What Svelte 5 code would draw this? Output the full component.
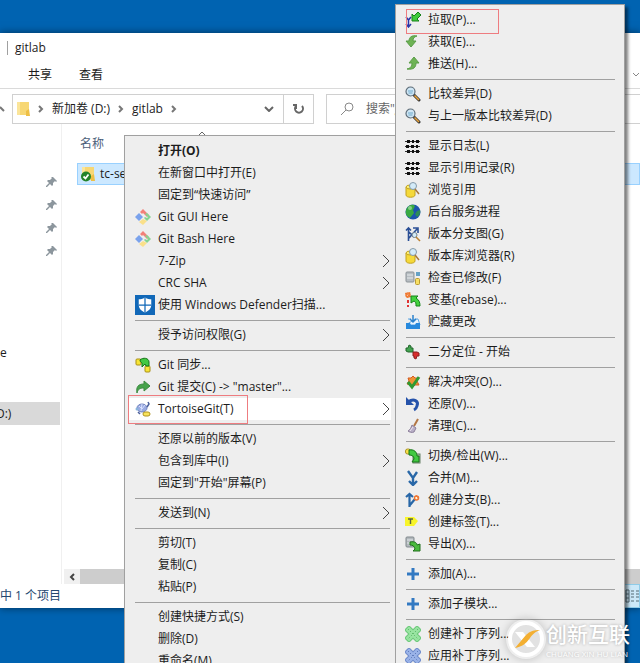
<script>
  // null は区切り線
  const contextMenu = [
    { text: '打开(O)', bold: true },
    { text: '在新窗口中打开(E)' },
    { text: '固定到“快速访问”' },
    { text: 'Git GUI Here', icon: 'git' },
    { text: 'Git Bash Here', icon: 'git' },
    { text: '7-Zip', arrow: true },
    { text: 'CRC SHA', arrow: true },
    { text: '使用 Windows Defender扫描...', icon: 'defender' },
    null,
    { text: '授予访问权限(G)', arrow: true },
    null,
    { text: 'Git 同步...', icon: 'sync' },
    { text: 'Git 提交(C) -> "master"...', icon: 'commit' },
    { text: 'TortoiseGit(T)', icon: 'tortoise', arrow: true, active: true, marked: true },
    null,
    { text: '还原以前的版本(V)' },
    { text: '包含到库中(I)', arrow: true },
    { text: '固定到"开始"屏幕(P)' },
    null,
    { text: '发送到(N)', arrow: true },
    null,
    { text: '剪切(T)' },
    { text: '复制(C)' },
    { text: '粘贴(P)' },
    null,
    { text: '创建快捷方式(S)' },
    { text: '删除(D)' },
    { text: '重命名(M)' }
  ];

  const gitMenu = [
    { text: '拉取(P)...', icon: 'pull', marked: true },
    { text: '获取(E)...', icon: 'fetch' },
    { text: '推送(H)...', icon: 'push' },
    null,
    { text: '比较差异(D)', icon: 'diff' },
    { text: '与上一版本比较差异(D)', icon: 'diff' },
    null,
    { text: '显示日志(L)', icon: 'log' },
    { text: '显示引用记录(R)', icon: 'log' },
    { text: '浏览引用', icon: 'browse' },
    { text: '后台服务进程', icon: 'globe' },
    { text: '版本分支图(G)', icon: 'graph' },
    { text: '版本库浏览器(R)', icon: 'browse' },
    { text: '检查已修改(F)', icon: 'check' },
    { text: '变基(rebase)...', icon: 'rebase' },
    { text: '贮藏更改', icon: 'stash' },
    null,
    { text: '二分定位 - 开始', icon: 'bisect' },
    null,
    { text: '解决冲突(O)...', icon: 'resolve' },
    { text: '还原(V)...', icon: 'revert' },
    { text: '清理(C)...', icon: 'clean' },
    null,
    { text: '切换/检出(W)...', icon: 'switch' },
    { text: '合并(M)...', icon: 'merge' },
    { text: '创建分支(B)...', icon: 'branch' },
    { text: '创建标签(T)...', icon: 'tag' },
    { text: '导出(X)...', icon: 'export' },
    null,
    { text: '添加(A)...', icon: 'add' },
    null,
    { text: '添加子模块...', icon: 'add' },
    null,
    { text: '创建补丁序列...', icon: 'patch' },
    { text: '应用补丁序列...', icon: 'apply' }
  ];

  const pins = [1, 2, 3, 4];
</script>

{#snippet folder()}
  <path d="M1 1h12v13H1z" fill="#f7d774" />
  <path d="M1 1h3v13H1z" fill="#fbe59a" />
  <path d="M10 10l3-2 1 7H10z" fill="#eebf45" />
{/snippet}

{#snippet lens()}
  <path d="M9 9l5 5" stroke="#333" stroke-width="3" stroke-linecap="round" />
  <path d="M9.500 9.500l4.500 4.500" stroke="#e8a33c" stroke-width="1.600" />
  <circle cx="5.500" cy="5.500" r="4.500" fill="#cfe6f5" stroke="#5e6d78" stroke-width="1.200" />
  <path d="M3 5h5M3.500 7h4" stroke="#6faacb" />
{/snippet}

{#snippet barrel()}
  <path d="M1 5v8c0 3 9 3 9 0V5z" fill="#f5d93a" stroke="#c2a21f" />
  <ellipse cx="5.500" cy="5" rx="4.500" ry="2" fill="#fbed72" stroke="#c2a21f" />
{/snippet}

{#snippet icon(name)}
  <svg class="icon" class:large={name === 'defender'} viewBox="0 0 16 16" fill="none" aria-hidden="true">
    {#if name === 'git'}
      <path d="M8 0l6 6-2 2-4-4-1 1-2-2z" fill="#f28079" />
      <path d="M12 4l4 4-4 4-3-3 1-1 2 1 1-1-3-3z" fill="#86d492" />
      <path d="M4 4l4 4-4 4-4-4z" fill="#7aa2ec" />
      <path d="M8 10l4 2-4 4-4-3z" fill="#fae08a" />
    {:else if name === 'defender'}
      <path d="M0 0h16v16H0z" fill="#1168b8" />
      <path d="M8 2c2 1.200 3.500 1.400 5 1.400V8c0 3-2.500 5-5 6-2.500-1-5-3-5-6V3.400C4.500 3.400 6 3.200 8 2z" fill="#fff" />
      <path d="M8 2v12M3 8h10" stroke="#1168b8" />
    {:else if name === 'sync'}
      <rect x="1" y="2" width="5" height="6" rx="1" fill="#f7e436" stroke="#a99014" />
      <rect x="10" y="9" width="5" height="6" rx="1" fill="#f7e436" stroke="#a99014" />
      <path d="M5 3c3-3 9-2 9 2v4h-3l-1-2-3 3V6c-1-1-2-1-2-3z" fill="#42c943" stroke="#167417" />
    {:else if name === 'commit'}
      <path d="M2 14c-1-6 1-9 7-9V2l6 5-6 5V9c-4 0-6 1-7 5z" fill="#46a34b" stroke="#3c8a40" />
    {:else if name === 'tortoise'}
      <ellipse cx="7" cy="7" rx="5" ry="4" fill="#9aabe2" stroke="#7384bf" />
      <path d="M4 5l3 3 3-4M6 10l1-7" stroke="#dae1ff" />
      <circle cx="2" cy="8" r="1.500" fill="#8ab4db" />
      <path d="M3 11l2 2M13 1l1 2-2 3" stroke="#4b5f9b" stroke-width="1.500" />
      <rect x="8" y="11" width="7" height="4" rx="2" fill="#fae45b" stroke="#b09323" />
    {:else if name === 'pull'}
      <path d="M3.500 15V8M1 5l2.500 3L6 5M1 12l2.500 3L6 12" stroke="#2a35a8" stroke-width="1.500" />
      <path d="M7 2v7h7l-2-2 4-4-3-3-4 4z" fill="#3ecb3d" stroke="#168118" />
    {:else if name === 'fetch'}
      <path d="M12 2C7 1 4 3 4 7H1l5 6 5-6H8c0-3 1-4 4-5z" fill="#6eb355" stroke="#5a9d48" />
    {:else if name === 'push'}
      <path d="M2 13c7 1 9-2 9-6h3L9 1 4 7h3c0 3-1 5-5 6z" fill="#6eb355" stroke="#5a9d48" />
    {:else if name === 'diff'}
      {@render lens()}
    {:else if name === 'log'}
      <path d="M0 3.500h15M0 8.500h15M0 13.500h15" stroke="#333" />
      <path d="M2 3.500h3M7 3.500h2M11 3.500h3M1 8.500h3M6 8.500h3M11 8.500h2M2 13.500h3M7 13.500h2M11 13.500h3" stroke="#111" stroke-width="3" />
    {:else if name === 'browse'}
      {@render barrel()}
      <circle cx="8" cy="4" r="3.500" fill="#d4ebf8" stroke="#8499a8" />
      <path d="M10 7l4 5" stroke="#a8793a" stroke-width="1.500" />
    {:else if name === 'globe'}
      <circle cx="8" cy="8" r="7.500" fill="#1c55ae" />
      <path d="M2 4c3-4 6-4 8-2L8 6l1 3-4 5C0 12 0 7 2 4z" fill="#39a942" />
      <path d="M12 7l3-1c1 3-1 6-3 7l-2-3z" fill="#2d8c59" />
      <circle cx="5" cy="4" r="2" fill="#a4dea4" opacity=".7" />
    {:else if name === 'graph'}
      <path d="M3.500 15V2M1 4.500L3.500 2 6 4.500M4 12l8-9M8 2h5v5M4 6l5 5" stroke="#2a4f96" stroke-width="1.600" />
      <circle cx="9.500" cy="9" r="2.500" fill="#d4ebf8" stroke="#72818c" />
      <path d="M11 11l4 4" stroke="#bd8233" stroke-width="1.600" />
    {:else if name === 'check'}
      <rect x="1" y="2" width="8" height="10" rx="1" fill="#b7bdc2" stroke="#8c9398" />
      <path d="M2 5h6M2 8h6" stroke="#e7ebed" />
      <path d="M11 3h4M11 5h4" stroke="#3988b8" stroke-width="1.500" />
      <rect x="10.500" y="8.500" width="4" height="6" rx="1" fill="#f8df64" stroke="#b99b32" />
    {:else if name === 'rebase'}
      <circle cx="3" cy="3" r="2" stroke="#f0762d" stroke-width="1.500" />
      <path d="M0 1l6 4M5 0L2 6" stroke="#f0762d" />
      <path d="M3 8v3M3 13v2" stroke="#df3232" stroke-width="2" />
      <path d="M6 4h7l-2 2c3 2 4 4 4 8h-4c0-3 0-4-2-5l-3 2z" fill="#42d13e" stroke="#16821a" />
    {:else if name === 'stash'}
      <path d="M3 5h3M10 5h3l2 6H1z" fill="#e7f4ff" stroke="#5aa5e4" />
      <path d="M1 9h4l1 2h4l1-2h4v6H1z" fill="#2789dd" />
      <path d="M8 1v7M5 5l3 3 3-3" stroke="#2b81cc" stroke-width="1.500" />
    {:else if name === 'bisect'}
      <path d="M1 4h2l1-3 2 1v2h2v4H3L1 7z" fill="#43a451" stroke="#23662c" />
      <path d="M8 8h4l2 1v3h-2l-1 3-2-1v-2H8z" fill="#d82d2d" stroke="#8a2020" />
    {:else if name === 'resolve'}
      <path d="M3 4l3 0 2-2 2 2 3 0-1 3 2 4-4 0-3 3-1-3-4-1 2-3z" fill="#ed9434" stroke="#d55c24" />
      <path d="M3 8l4 5 7-10" stroke="#2f9a32" stroke-width="3" />
    {:else if name === 'revert'}
      <path d="M3 6c6-4 11-1 9 4-.5 2-1 3-3 4" stroke="#2552aa" stroke-width="3" />
      <path d="M1 1v8h8z" fill="#2552aa" />
    {:else if name === 'clean'}
      <path d="M13 1L9 8" stroke="#b37745" stroke-width="2" />
      <path d="M7 7l4 3-2 4c-2 1-5 0-6-1 2-1 3-3 4-6z" fill="#b9b0c8" stroke="#8d809b" />
      <path d="M5 13l3-4" stroke="#efe5ef" />
    {:else if name === 'switch'}
      <rect x="8" y="6" width="7" height="9" fill="#b6c6b6" stroke="#668066" />
      <rect x="0.500" y="1" width="5" height="5" rx="2" fill="#f7df48" stroke="#ad9329" />
      <path d="M4 2c5-1 8 2 8 6h2v6H7l2-3c0-3-2-4-5-4z" fill="#42c943" stroke="#167417" />
    {:else if name === 'merge'}
      <path d="M3 1l5 7 4-6M8 7v7M4 11l4 4 4-4" stroke="#2867a7" stroke-width="2.400" />
    {:else if name === 'branch'}
      <path d="M4.500 15V2M1 5l3.500-3L8 5M5 13l5-6" stroke="#2867a7" stroke-width="2.200" />
      <circle cx="11.500" cy="6" r="2" fill="#fff4d7" stroke="#ef7532" stroke-width="1.500" />
      <path d="M11 3l1 2M14 5l-2 1" stroke="#ef7532" />
    {:else if name === 'tag'}
      <path d="M0 3h9l4 4-4 5H0z" fill="#f8f52a" />
      <path d="M3 5h5M5.500 5v5" stroke="#5a6440" stroke-width="1.400" />
    {:else if name === 'export'}
      <rect x="1" y="1" width="8" height="10" rx="1" fill="#b3b9bd" stroke="#81898e" />
      <path d="M2 4h6M2 7h6" stroke="#e2e8ea" />
      <path d="M5 6c5-1 7 1 7 3l3-1v7H8l2-2c-1-3-2-4-5-4z" fill="#4abb3d" stroke="#206f1d" />
    {:else if name === 'add'}
      <path d="M8 2v12M2 8h12" stroke="#3279c2" stroke-width="3" />
    {:else if name === 'patch'}
      <path d="M4 4l8 8M12 4l-8 8" stroke="#6cc87a" stroke-width="7" stroke-linecap="square" stroke-linejoin="round" />
      <path d="M4 4l8 8M12 4l-8 8" stroke="#98e4a1" stroke-width="5" stroke-linecap="square" />
      <path d="M3 3l10 10M13 3L3 13" stroke="#4daa5b" stroke-dasharray="1 2" />
    {:else if name === 'apply'}
      <path d="M4 4l8 8M12 4l-8 8" stroke="#6f8bcb" stroke-width="7" stroke-linecap="square" />
      <path d="M4 4l8 8M12 4l-8 8" stroke="#9ab3e8" stroke-width="5" stroke-linecap="square" />
      <path d="M3 3l10 10M13 3L3 13" stroke="#4966ab" stroke-dasharray="1 2" />
    {/if}
  </svg>
{/snippet}

{#snippet menu(items)}
  {#each items as item}
    {#if item}
      <button class="item" class:bold={item.bold} class:active={item.active} class:marked={item.marked} role="menuitem">
        <span class="slot">
          {#if item.icon}{@render icon(item.icon)}{/if}
        </span>
        <span class="label">{item.text}</span>
        {#if item.arrow}
          <svg class="arrow" viewBox="0 0 8 14" aria-hidden="true"><path d="M1 1l6 6-6 6" /></svg>
        {/if}
      </button>
    {:else}
      <hr />
    {/if}
  {/each}
{/snippet}

<div class="desktop">
  <main class="explorer">
    <header class="title">gitlab</header>

    <nav class="tabs">
      <button>共享</button>
      <button>查看</button>
      <svg class="expand" viewBox="0 0 8 6" aria-hidden="true"><path d="M1 1l3 3 3-3" /></svg>
    </nav>

    <div class="toolbar">
      <svg class="up" viewBox="0 0 8 8" aria-hidden="true"><path d="M0 2l4 4" /></svg>
      <div class="address">
        <svg class="folder" viewBox="0 0 16 16" aria-hidden="true">{@render folder()}</svg>
        <svg class="crumb" viewBox="0 0 6 8" aria-hidden="true"><path d="M1 1l3 3-3 3" /></svg>
        <button>新加卷 (D:)</button>
        <svg class="crumb" viewBox="0 0 6 8" aria-hidden="true"><path d="M1 1l3 3-3 3" /></svg>
        <button>gitlab</button>
        <svg class="crumb" viewBox="0 0 6 8" aria-hidden="true"><path d="M1 1l3 3-3 3" /></svg>
        <button class="drop" aria-label="以前的位置">
          <svg viewBox="0 0 10 6" aria-hidden="true"><path d="M1 1l4 4 4-4" /></svg>
        </button>
        <button class="refresh" aria-label="刷新">
          <svg viewBox="0 0 12 12" aria-hidden="true"><path d="M3 3a4 4 0 1 0 6 0M3 6V2H0" /></svg>
        </button>
      </div>
      <label class="search">
        <svg viewBox="0 0 14 14" aria-hidden="true"><path d="M1 13l5-5" /><circle cx="9" cy="5" r="4" /></svg>
        <input type="text" placeholder={'搜索"gitlab"'} aria-label="搜索" />
      </label>
    </div>

    <div class="content">
      <aside>
        <div class="pins">
          {#each pins as pin (pin)}
            <svg viewBox="0 0 12 12" aria-hidden="true">
              <path d="M7 1l4 4-1 1-1-1-2 2v2l-1 1-2-2-3 3-1 0 0-1 3-3-2-2 1-1h2l2-2-1-1z" />
            </svg>
          {/each}
        </div>
        <span class="place">e</span>
        <span class="place drive">D:)</span>
      </aside>

      <section class="files">
        <button class="column">
          名称
          <svg viewBox="0 0 8 5" aria-hidden="true"><path d="M1 4l3-3 3 3" /></svg>
        </button>
        <button class="file">
          <svg class="folder" viewBox="0 0 16 16" aria-hidden="true">
            {@render folder()}
            <circle cx="5" cy="10.500" r="5" fill="#23832b" />
            <path d="M2.500 10.500l2 2 3-4" fill="none" stroke="#fff" stroke-width="1.800" />
          </svg>
          tc-server
        </button>
        <div class="scrollbar">
          <button aria-label="向左滚动">
            <svg viewBox="0 0 6 8" aria-hidden="true"><path d="M5 1L2 4l3 3" /></svg>
          </button>
          <div class="thumb"></div>
        </div>
      </section>
    </div>

    <footer>
      <span>中 1 个项目</span>
      <button class="view" aria-label="详细信息">
        <svg viewBox="0 0 14 14" aria-hidden="true"><path d="M1 1h3v12H1zM1 5h3M1 9h3M6 2h3M6 5h3M6 8h3M6 12h3M11 2h3M11 5h3M11 8h3M11 12h3" /></svg>
      </button>
    </footer>
  </main>

  <div class="menu context" role="menu">
    {@render menu(contextMenu)}
  </div>

  <div class="menu git" role="menu">
    {@render menu(gitMenu)}
  </div>

  <div class="brand">
    <svg viewBox="0 0 40 40" aria-hidden="true">
      <circle cx="20" cy="20" r="16" fill="#e2e2e2" stroke="#fff" stroke-width="4" />
      <path d="M9 13h8l12 15h-8z" fill="#fff" />
      <path d="M9 29L20 16c4-4 8-5 14-5-5 2-7 4-10 8-4 6-9 9-15 10z" fill="#f3af32" />
    </svg>
    <div class="brand-text">
      <strong>创新互联</strong>
      <small>CHUANG XIN HU LIAN</small>
    </div>
  </div>
</div>

<style>
  :global(body) {
    margin: 0;
  }

  .desktop {
    position: relative;
    display: flex;
    height: 100vh;
    padding: 33px 0 55px;
    box-sizing: border-box;
    overflow: hidden;
    background: #0063b1;
    color: #1c1c1c;
    font-family: "Open Sans", "Noto Sans CJK SC", sans-serif;
    font-size: 12px;
    line-height: 16px;
  }

  button {
    padding: 0;
    border: 0;
    background: none;
    color: inherit;
    font: inherit;
    text-align: left;
    white-space: nowrap;
  }

  svg {
    display: block;
    flex: none;
  }

  .explorer {
    display: flex;
    flex: 1;
    flex-direction: column;
    min-width: 0;
    background: #fff;
    box-shadow: 0 0 8px rgba(0, 0, 0, 0.5);
  }

  .title {
    margin: 8px 0 0 7px;
    padding-left: 7px;
    border-left: 1px solid #a0a0a0;
    line-height: 14px;
  }

  .tabs {
    display: flex;
    align-items: center;
    gap: 27px;
    padding: 12px 0 5px 28px;
    border-bottom: 1px solid #dadada;
  }

  .expand {
    width: 8px;
    height: 6px;
    margin-left: auto;
    fill: none;
    stroke: #888;
  }

  .toolbar {
    display: flex;
    align-items: center;
    padding-top: 5px;
  }

  .up {
    width: 8px;
    height: 8px;
    margin-right: 4px;
    stroke: #777;
    stroke-width: 2;
  }

  .address {
    display: flex;
    align-items: center;
    width: 302px;
    height: 30px;
    box-sizing: border-box;
    border: 1px solid #d0d0d0;
  }

  .folder {
    width: 16px;
    height: 16px;
    margin-left: 3px;
  }

  .crumb {
    width: 6px;
    height: 8px;
    margin: 0 8px;
    fill: none;
    stroke: #777;
    stroke-width: 2;
  }

  .folder + .crumb {
    margin-left: 6px;
  }

  .drop {
    margin-left: auto;
    padding-right: 9px;
  }

  .drop svg {
    width: 10px;
    height: 6px;
    fill: none;
    stroke: #666;
    stroke-width: 2;
  }

  .refresh {
    display: flex;
    align-items: center;
    height: 100%;
    padding: 0 8px 0 9px;
    border-left: 1px solid #d0d0d0;
  }

  .refresh svg {
    width: 12px;
    height: 12px;
    fill: none;
    stroke: #666;
    stroke-width: 2;
  }

  .search {
    display: flex;
    flex: 1;
    align-items: center;
    gap: 12px;
    height: 30px;
    margin-left: 12px;
    padding-left: 13px;
    box-sizing: border-box;
    border: 1px solid #d0d0d0;
    border-right: 0;
  }

  .search svg {
    width: 14px;
    height: 14px;
    fill: none;
    stroke: #888;
  }

  .search input {
    flex: 1;
    min-width: 0;
    padding: 0;
    border: 0;
    outline: 0;
    font: inherit;
  }

  .search input::placeholder {
    color: #666;
  }

  .content {
    display: flex;
    flex: 1;
    min-height: 0;
  }

  aside {
    width: 62px;
    box-sizing: border-box;
    padding: 52px 1px 0 0;
    border-right: 1px solid #f0f0f0;
  }

  .pins {
    display: flex;
    flex-direction: column;
    align-items: flex-end;
    gap: 11px;
    margin-bottom: 84px;
    padding-right: 2px;
  }

  .pins svg {
    width: 12px;
    height: 12px;
    fill: #8c969d;
  }

  .place {
    display: block;
    line-height: 23px;
  }

  .drive {
    margin-top: 38px;
    background: #d9d9d9;
    text-indent: -4px;
  }

  .files {
    display: flex;
    flex: 1;
    flex-direction: column;
    min-width: 0;
  }

  .column {
    display: flex;
    gap: 94px;
    margin: 8px 0 0 18px;
    padding: 4px 0;
    color: #4c607a;
  }

  .column svg {
    width: 8px;
    height: 5px;
    margin-top: -5px;
    fill: none;
    stroke: #666;
  }

  .file {
    display: flex;
    align-items: center;
    gap: 3px;
    height: 22px;
    margin: 7px 0 0 15px;
    box-sizing: border-box;
    border: 1px solid #99d1ff;
    background: #cce8ff;
  }

  .scrollbar {
    display: flex;
    height: 15px;
    margin: auto 0 0 2px;
    background: #f0f0f0;
  }

  .scrollbar button {
    padding: 0 5px;
  }

  .scrollbar svg {
    width: 6px;
    height: 8px;
    fill: none;
    stroke: #444;
    stroke-width: 2;
  }

  .thumb {
    flex: 1;
    background: #cdcdcd;
  }

  footer {
    display: flex;
    align-items: center;
    justify-content: space-between;
    height: 24px;
    color: #24476f;
  }

  .view {
    display: flex;
    align-items: center;
    height: 24px;
    box-sizing: border-box;
    border: 1px solid #8ecbe8;
    background: #cce8f8;
  }

  .view svg {
    width: 14px;
    height: 14px;
    fill: none;
    stroke: #556a75;
  }

  .menu {
    position: absolute;
    box-sizing: border-box;
    padding: 4px;
    border: 1px solid #a0a0a0;
    background: #eee;
    box-shadow: 3px 3px 3px rgba(0, 0, 0, 0.5);
  }

  .context {
    top: 135px;
    left: 124px;
    width: 272px;
  }

  .git {
    top: 4px;
    left: 395px;
    width: 230px;
  }

  .item {
    position: relative;
    display: flex;
    align-items: center;
    gap: 3px;
    width: 100%;
    height: 22px;
    padding-left: 6px;
  }

  .git .item {
    padding-left: 5px;
  }

  .bold {
    font-weight: 700;
  }

  .active {
    background: #fff;
  }

  /* 操作手順を示す赤枠 */
  .marked::after {
    content: "";
    position: absolute;
    top: -3px;
    left: -1px;
    width: 118px;
    height: 27px;
    border: 1px solid #ee7c80;
  }

  .git .marked::after {
    top: 0;
    left: 6px;
    width: 91px;
    height: 23px;
  }

  .slot {
    width: 20px;
  }

  .icon {
    width: 16px;
    height: 16px;
  }

  .large {
    width: 20px;
    height: 20px;
  }

  .arrow {
    width: 8px;
    height: 14px;
    margin-left: auto;
    margin-right: 1px;
    fill: none;
    stroke: #444;
  }

  hr {
    height: 1px;
    margin: 4px 5px 3px 6px;
    border: 0;
    background: #a0a0a0;
  }

  .context hr {
    margin-right: 1px;
  }

  .brand {
    position: absolute;
    right: 10px;
    bottom: 4px;
    display: flex;
    align-items: center;
    color: #fff;
    pointer-events: none;
  }

  .brand svg {
    width: 40px;
    height: 40px;
    border-radius: 50%;
    box-shadow: 0 0 8px rgba(0, 0, 0, 0.2);
  }

  .brand-text {
    display: flex;
    flex-direction: column;
    text-shadow: 0 0 3px rgba(0, 0, 0, 0.3);
  }

  .brand strong {
    font-size: 21px;
    font-weight: 500;
    line-height: 30px;
  }

  .brand small {
    font-size: 8px;
    line-height: 10px;
  }
</style>
